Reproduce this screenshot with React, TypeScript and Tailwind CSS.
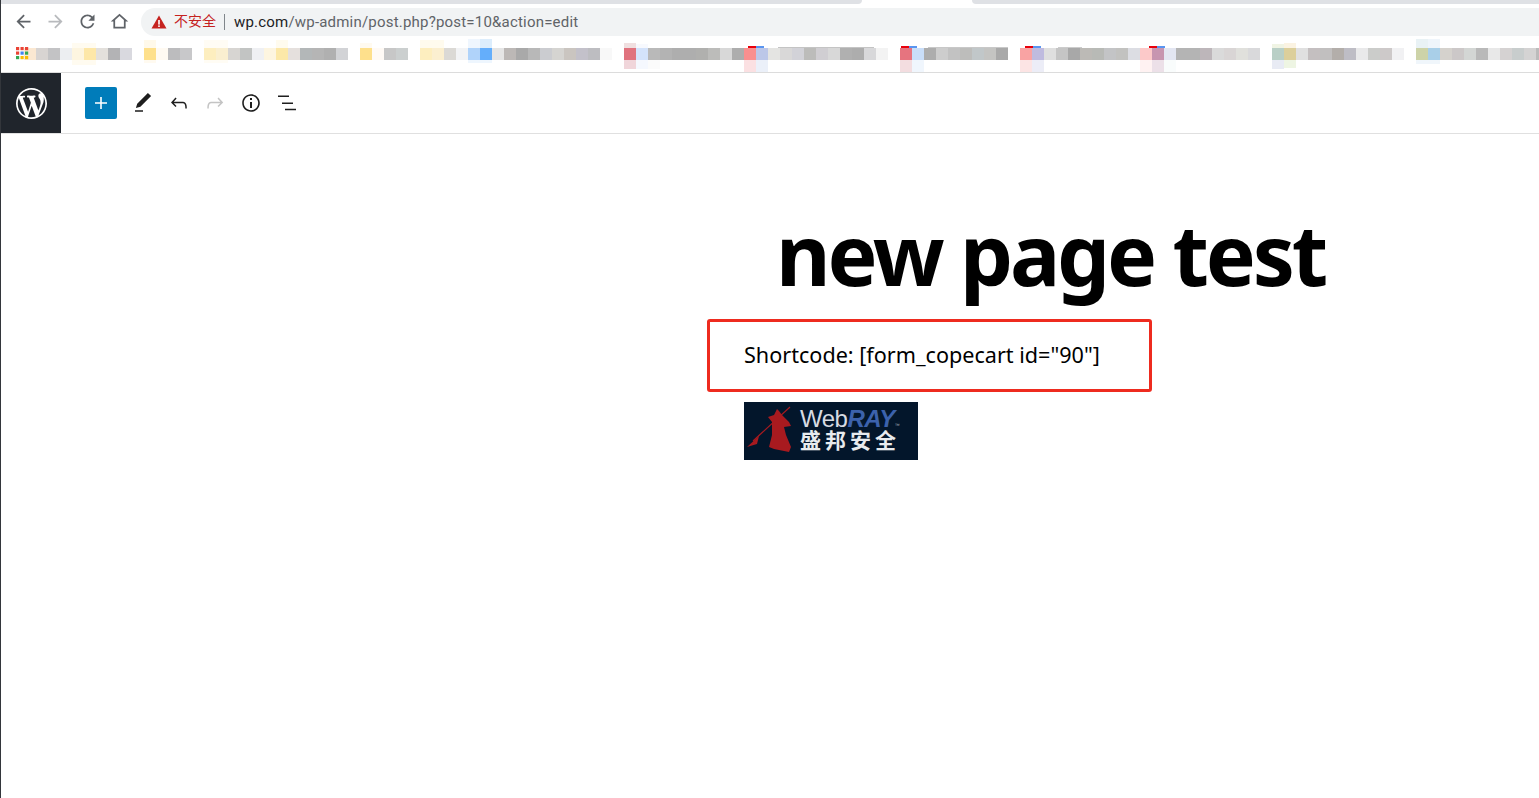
const cjk = "font-['Noto_Sans_CJK_SC','Noto_Sans',sans-serif]"

// blurred bookmark strip: each cell is 12px wide, keyed by its left edge
const mosaic: [number, string[]][] = [
  [24, ["#fbe8d2", "#d8d4d2", "#c3c3c5", "#eceef1", "#fdf5e0", "#fde7a8", "#e3e0dc", "#b3b3b5", "#d9d9df"]],
  [144, ["#fee08c", "#fffaf2", "#bcbcbe", "#c8c8ca"]],
  [204, ["#fdeebf", "#faefd0", "#d7d5d2", "#c2c4c3", "#eff0f3", "#fdf5e0", "#fce8a8", "#e5e0dd", "#b3b7b8", "#b5b5b5", "#b0b0b0", "#d2d3d6"]],
  [360, ["#fee08c", "#fffaf5", "#c7c7c7", "#cbcfcf"]],
  [420, ["#fdeebf", "#fbefd0", "#dbd9d5", "#f2f3f5", "#b0d3fa", "#64aefb", "#e5e5e5", "#bcb8b6", "#a9a9a9", "#b8b8b8", "#cbccd0", "#d5d4d1", "#cac5c0", "#c3c1ca", "#bdbdc1", "#f8f8f8"]],
  [624, ["#e0727e", "#d4e3fb", "#b9b9b9", "#b3b3b3", "#aeaeae", "#aeaeae", "#b0b0ae", "#bcbcba", "#d8d8d8", "#adadad"]],
  [744, ["#f98f8f", "#bcc7e8", "#e4e4e2", "#d9d8d8", "#d2d2d8", "#bcbcba", "#d0ced2", "#d8d8d8", "#b0b0b0", "#adadad", "#d8d8da", "#f3f3f3"]],
  [900, ["#e6747f", "#c9def9", "#adadad", "#cdcdcd", "#c2c2c2", "#bdbdbb", "#c1c7c9", "#c4c4c2", "#a9a9a9"]],
  [1020, ["#f9a3a3", "#bfbbdf", "#dfdfdf", "#c5c5c5", "#a8a8a8", "#bcbab6", "#b8bab6", "#c3c4c6", "#c2c2c0", "#dcdde3", "#fcc9c9", "#c795b0", "#e3e6f2", "#b4b4b4", "#b4b4b4", "#bdb6ba", "#dadada", "#d9d5d5", "#e0e0dc", "#d9d9db"]],
  [1272, ["#b9cfc6", "#dccf9b", "#e0e0e0", "#c4bfc0", "#c1bfbf", "#b3aeaa", "#bebdc5", "#e9e9ea", "#cbccca", "#cdc9c9", "#f1f1f3"]],
  [1416, ["#cdd3a8", "#a9cfe8", "#d5d2cd", "#ccc8c8", "#d3d6d4", "#b9b9b9", "#e8e8e8", "#d5d2d2", "#c8cdcd", "#d4d3d3", "#bbbbbb"]],
]

// pale bleed above and below the cells: x, y, w, h, colour
const halos: [number, number, number, number, string][] = [
  [72, 43, 24, 5, "#fffbf0"], [72, 60, 24, 5, "#fffbf0"],
  [144, 40, 12, 8, "#fff9ea"], [144, 60, 12, 3, "#fffaf0"],
  [204, 40, 24, 8, "#fffcf4"], [204, 60, 24, 3, "#fffcf4"],
  [276, 40, 12, 8, "#fffbee"], [360, 43, 12, 5, "#fffaf0"],
  [420, 40, 24, 8, "#fffbee"], [468, 39, 12, 9, "#eff6fe"], [480, 39, 12, 9, "#dcedfc"],
  [468, 60, 24, 3, "#eef6fe"],
  [624, 43, 12, 5, "#f0dfe0"], [636, 44, 12, 4, "#f7f9fe"],
  [624, 60, 12, 9, "#f0d5da"], [636, 60, 12, 9, "#f5f8fe"], [648, 60, 12, 9, "#fbfbfb"],
  [744, 60, 12, 12, "#fbe0e2"], [756, 60, 12, 12, "#ebf0f9"],
  [900, 60, 12, 12, "#f3dde0"], [912, 60, 12, 12, "#f0f6fd"],
  [1020, 60, 12, 12, "#fce4e4"], [1032, 60, 12, 12, "#ecedf7"],
  [1140, 60, 12, 12, "#fff2f2"], [1152, 60, 12, 12, "#ece0e8"], [1164, 60, 12, 12, "#f9fcfc"],
  [1272, 44, 12, 4, "#f0f4e4"], [1284, 43, 12, 5, "#fbf3e2"],
  [1272, 60, 12, 9, "#e8ebf4"], [1284, 60, 12, 8, "#eef5e3"],
  [1416, 39, 12, 9, "#e9f2f5"], [1428, 39, 12, 9, "#eff5fb"],
  [1416, 60, 24, 4, "#f0f6fb"],
]

// tops of the favicons and labels left unblurred
const slivers: [number, number, number, number, string][] = [
  [748, 46, 8, 2, "#e8000b"], [756, 46, 8, 2, "#5a95f0"],
  [901, 46, 8, 2, "#e8000b"], [909, 46, 8, 2, "#5a95f0"],
  [1025, 46, 8, 2, "#e8000b"], [1033, 46, 8, 2, "#5a95f0"],
  [1149, 46, 8, 2, "#e8000b"], [1157, 46, 8, 2, "#5a95f0"],
  [778, 47, 96, 1, "#c4c4c4"], [928, 47, 80, 1, "#c8c8c8"], [1058, 47, 24, 1, "#cccccc"],
]

const appDots = [
  ["#ea4335", "#ea4335", "#ea4335"],
  ["#ea4335", "#4285f4", "#34a853"],
  ["#34a853", "#fbbc05", "#fbbc05"],
]

function BookmarkStrip() {
  return (
    <svg width="1538" height="35" viewBox="1 37 1538 35" className="block">
      {halos.map(([x, y, w, h, c], i) => (
        <rect key={i} x={x} y={y} width={w} height={h} fill={c} />
      ))}
      {mosaic.flatMap(([start, cells]) =>
        cells.map((c, i) => <rect key={start + i * 12} x={start + i * 12} y={48} width={12} height={12} fill={c} />)
      )}
      {slivers.map(([x, y, w, h, c], i) => (
        <rect key={i} x={x} y={y} width={w} height={h} fill={c} />
      ))}
      {appDots.flatMap((row, r) =>
        row.map((c, i) => <rect key={`${r}-${i}`} x={16 + i * 4.5} y={47 + r * 4.5} width={3.2} height={3.2} fill={c} />)
      )}
    </svg>
  )
}

function ChromeIcon({ d, className }: { d: string; className: string }) {
  return (
    <svg viewBox="0 0 24 24" className={`h-[21px] w-[21px] fill-current ${className}`}>
      <path d={d} />
    </svg>
  )
}

function WpIcon({ d, className = "text-[#1e1e1e]" }: { d: string; className?: string }) {
  return (
    <svg viewBox="0 0 24 24" className={`h-6 w-6 fill-current ${className}`}>
      <path d={d} />
    </svg>
  )
}

const arrow = "M20 11H7.83l5.59-5.59L12 4l-8 8 8 8 1.41-1.41L7.83 13H20v-2z"

export default function App() {
  return (
    <div className="h-[798px] w-full overflow-hidden border-l border-[#33363b] bg-white">
      {/* Browser chrome */}
      <div className="flex h-1 bg-white">
        <div className="w-[861px] rounded-br-md bg-[#dfe1e5]" />
        <div className="w-[110px]" />
        <div className="flex-1 rounded-bl-md bg-[#dfe1e5]" />
      </div>
      <div className="flex h-[33px] items-start pt-1">
        <div className="flex w-[140px] items-center pl-[11.5px] pt-[3px]">
          <ChromeIcon d={arrow} className="text-[#5f6368]" />
          <ChromeIcon d={arrow} className="ml-[11px] rotate-180 text-[#b8babd]" />
          <ChromeIcon
            d="M17.65 6.35C16.2 4.9 14.21 4 12 4c-4.42 0-7.99 3.58-7.99 8s3.57 8 7.99 8c3.73 0 6.84-2.55 7.73-6h-2.08c-.82 2.33-3.04 4-5.65 4-3.31 0-6-2.69-6-6s2.69-6 6-6c1.66 0 3.14.69 4.22 1.78L13 11h7V4l-2.35 2.35z"
            className="ml-[11px] text-[#5f6368]"
          />
          <ChromeIcon
            d="M12 5.69l5 4.5V18H7v-7.81l5-4.5M12 3L2 12h3v8h14v-8h3L12 3z"
            className="ml-[11px] text-[#5f6368]"
          />
        </div>
        <div className="flex h-7 flex-1 items-center rounded-l-full bg-[#f1f3f4] pl-[10px]">
          <svg viewBox="0 0 16 16" className="h-4 w-4">
            <path d="M8 1.5 15.5 14.5H.5z" fill="#c5221f" />
            <rect x="7.2" y="6" width="1.6" height="4.6" fill="#fff" />
            <rect x="7.2" y="11.4" width="1.6" height="1.6" fill="#fff" />
          </svg>
          <span className={`ml-[7px] -translate-y-[2px] text-[14px] text-[#c5221f] ${cjk}`}>不安全</span>
          <span className="ml-2 h-4 w-px bg-[#80868b]" />
          <span className="ml-[9px] font-['Roboto',sans-serif] text-[15px] tracking-[0.2px] text-[#5f6368]">
            <span className="text-[#202124]">wp.com</span>/wp-admin/post.php?post=10&amp;action=edit
          </span>
        </div>
      </div>
      <div className="h-9 border-b border-[#dcdcdc]">
        <BookmarkStrip />
      </div>

      {/* Editor toolbar */}
      <div className="flex h-[61px] items-center border-b border-[#e0e0e0]">
        <div className="flex h-[60px] w-[60px] items-center justify-center bg-[#20252c]">
          <svg viewBox="0 0 20 20" className="h-[31px] w-[31px] fill-white">
            <path d="M20 10c0-5.51-4.49-10-10-10C4.48 0 0 4.49 0 10c0 5.52 4.48 10 10 10 5.51 0 10-4.48 10-10zM7.78 15.37L4.37 6.22c.55-.02 1.17-.08 1.17-.08.5-.06.44-1.13-.06-1.11 0 0-1.45.11-2.37.11-.18 0-.37 0-.58-.01C4.12 2.69 6.87 1.11 10 1.11c2.33 0 4.45.87 6.05 2.34-.68-.11-1.65.39-1.65 1.58 0 .74.45 1.36.9 2.1.35.61.55 1.36.55 2.46 0 1.49-1.4 5-1.4 5l-3.03-8.37c.54-.02.82-.17.82-.17.5-.05.44-1.25-.06-1.22 0 0-1.44.12-2.38.12-.87 0-2.33-.12-2.33-.12-.5-.03-.56 1.2-.06 1.22l.92.08 1.26 3.41zM17.41 10c.24-.64.74-1.87.43-4.25.7 1.29 1.05 2.71 1.05 4.25 0 3.29-1.73 6.24-4.4 7.78.97-2.59 1.94-5.2 2.92-7.78zM6.1 18.09C3.12 16.65 1.11 13.53 1.11 10c0-1.3.23-2.48.72-3.59C3.25 10.3 4.67 14.2 6.1 18.09zm4.03-6.63l2.58 6.98c-.86.29-1.76.45-2.71.45-.79 0-1.57-.11-2.29-.33.81-2.38 1.62-4.74 2.42-7.1z" />
          </svg>
        </div>
        <div className="ml-6 flex h-8 w-8 items-center justify-center rounded-[2px] bg-[#007cba]">
          <WpIcon d="M18 11.2h-5.2V6h-1.6v5.2H6v1.6h5.2V18h1.6v-5.2H18z" className="text-white" />
        </div>
        <div className="ml-[14px] flex items-center gap-3">
          <WpIcon d="M20.1 5.1L16.9 2 6.2 12.7l-1.3 4.4 4.5-1.3L20.1 5.1zM4 20.8h8v-1.5H4v1.5z" />
          <WpIcon d="M18.3 11.7c-.6-.6-1.4-.9-2.3-.9H6.7l2.9-3.3-1.1-1-4.5 5L8.5 16l1-1-2.7-2.7H16c.5 0 .9.2 1.3.5 1 1 1 3.4 1 4.5v.3h1.5v-.2c0-1.5 0-4.3-1.5-5.7z" />
          <WpIcon
            d="M15.6 6.5l-1.1 1 2.9 3.3H8c-.9 0-1.7.3-2.3.9-1.4 1.5-1.4 4.2-1.4 5.6v.2h1.5v-.3c0-1.1 0-3.5 1-4.5.3-.3.7-.5 1.3-.5h9.2L14.5 15l1.1 1.1 4.6-4.6-4.6-5z"
            className="text-[#c4c4c4]"
          />
          <WpIcon d="M12 3.2c-4.8 0-8.8 3.9-8.8 8.8 0 4.8 3.9 8.8 8.8 8.8 4.8 0 8.8-3.9 8.8-8.8 0-4.8-4-8.8-8.8-8.8zm0 16c-4 0-7.2-3.3-7.2-7.2C4.8 8 8 4.8 12 4.8s7.2 3.3 7.2 7.2c0 4-3.2 7.2-7.2 7.2zM11 17h2v-6h-2v6zm0-8h2V7h-2v2z" />
          <WpIcon d="M3 4.4h11V6H3zM7 11.4h11V13H7zM10 17.7h11v1.6H10z" />
        </div>
      </div>

      {/* Post content */}
      <main className="ml-[706px] flex flex-col items-start">
        <h1 className="ml-[69px] mt-[70px] font-['Noto_Sans',sans-serif] text-[84px] font-bold leading-[100px] tracking-[-3.2px] text-black">
          new page test
        </h1>
        <div className="mt-[15px] flex h-[73px] w-[445px] items-center rounded-[3px] border-[3px] border-[#ee2b1f] pl-[34px] font-['Noto_Sans',sans-serif] text-[21.6px] text-black">
          Shortcode: [form_copecart id="90"]
        </div>
        <div className="ml-[37px] mt-[10px] flex h-[58px] w-[174px] overflow-hidden bg-[#03162b]">
          <svg viewBox="0 0 56 58" className="h-[58px] w-[56px] shrink-0">
            <path d="M46 5 9 39" stroke="#a81a1f" strokeWidth="1.2" />
            <path d="M15 34 3 45l10-3z" fill="#a81a1f" />
            <path d="M33 7l-3 6-6 2 4 5v13l-3 12 5 2 15 3 2-5-5-12-2-8 7-1-2-4-7-7-3-4z" fill="#a81a1f" />
          </svg>
          <div className="flex flex-col pt-[5px]">
            <p className="whitespace-nowrap font-['Liberation_Sans',sans-serif] text-[24px] leading-[23px] tracking-[-0.5px] text-[#d7dbe2]">
              Web
              <span className="font-bold italic text-[#3c62ac]">RAY</span>
              <span className="text-[5px] leading-none text-[#aeb4bd]">™</span>
            </p>
            <p className={`whitespace-nowrap text-[21px] font-bold leading-[18px] tracking-[4px] text-[#e8ebee] ${cjk}`}>盛邦安全</p>
          </div>
        </div>
      </main>
    </div>
  )
}
